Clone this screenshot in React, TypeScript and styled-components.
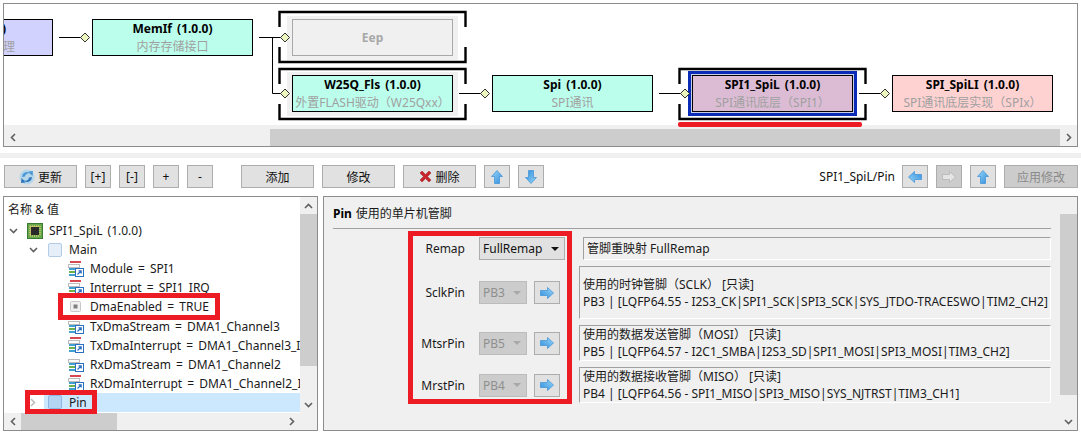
import React from "react";
import styled, { createGlobalStyle } from "styled-components";

const Global = createGlobalStyle`
  html, body { margin: 0; padding: 0; background: #fff; }
  body { font-family: "Noto Sans", "Noto Sans CJK SC", sans-serif; font-size: 12px; color: #1a1a1a; }
  * { box-sizing: border-box; }
`;

const Page = styled.div`
  position: relative;
  width: 1081px;
  height: 435px;
  overflow: hidden;
  background: #fff;
  display: flex;
  flex-direction: column;
  padding: 3px 3px 4px 3px;
`;

const DiagramPanel = styled.div`
  height: 144px;
  flex: none;
  border: 1px solid #8c8c8c;
  display: flex;
  flex-direction: column;
  background: #fff;
`;
const Canvas = styled.div`
  position: relative;
  height: 121px;
  flex: none;
  overflow: hidden;
`;
const Strip = styled.div`height: 4px; flex: none; background: #f0f0f0;`;
const HScroll = styled.div`
  height: 17px;
  display: flex;
  background: #f0f0f0;
  flex: none;
`;
const ScrollArrow = styled.div`
  width: 17px;
  flex: none;
  display: flex;
  align-items: center;
  justify-content: center;
`;
const ThumbGap = styled.div<{ $w: number }>`width: ${p => p.$w}px; flex: none;`;
const ThumbH = styled.div<{ $w: number }>`width: ${p => p.$w}px; flex: none; background: #cdcdcd;`;
const Grow = styled.div`flex: 1;`;

const Node = styled.div<{ $x: number; $y: number; $w: number; $bg: string }>`
  position: absolute;
  left: ${p => p.$x}px;
  top: ${p => p.$y}px;
  width: ${p => p.$w}px;
  height: 37px;
  background: ${p => p.$bg};
  border: 1px solid #000;
  text-align: center;
  display: flex;
  flex-direction: column;
  align-items: center;
  white-space: nowrap;
  overflow: hidden;
`;
const GhostNode = styled(Node)`
  border: 1px solid #a8a8a8;
  justify-content: center;
`;
const GhostName = styled.span`font-weight: 700; color: #a8a8a8; font-size: 12px;`;
const NodeName = styled.div`font-weight: 700; font-size: 12px; line-height: 17px; color: #000; word-spacing: 2px;`;
const NodeSub = styled.div`font-size: 12px; line-height: 19px; color: #a0a0a0;`;
const LeftClip = styled.div<{ $pr: number }>`width: 100%; text-align: right; padding-right: ${p => p.$pr}px;`;
const Plate = styled.div<{ $x: number; $y: number }>`
  position: absolute;
  left: ${p => p.$x}px;
  top: ${p => p.$y}px;
  width: 171px;
  height: 44px;
  background: #f0f0f0;
`;
const SelFrame = styled.div`
  position: absolute;
  left: 684px;
  top: 67px;
  width: 169px;
  height: 45px;
  border: 3px solid #0a2bb8;
  background: #c8d0e8;
`;
const Wires = styled.svg`
  position: absolute;
  left: 0;
  top: 0;
  width: 1073px;
  height: 121px;
  pointer-events: none;
`;
const RedBar = styled.div`
  position: absolute;
  left: 678px;
  top: 122px;
  width: 184px;
  height: 5px;
  border-radius: 2px;
  background: #ed1c24;
`;

const Splitter = styled.div`
  height: 5px;
  flex: none;
  margin: 6px -3px 0;
  background: #f0f0f0;
`;
const Toolbar = styled.div`
  flex: none;
  display: flex;
  align-items: flex-start;
  height: 38px;
  padding: 7px 0 0 1px;
`;
const Btn = styled.div<{ $w: number; $ml?: number; $off?: boolean }>`
  width: ${p => p.$w}px;
  margin-left: ${p => p.$ml ?? 0}px;
  height: 23px;
  flex: none;
  border: 1px solid #adadad;
  background: ${p => (p.$off ? "#cccccc" : "#e1e1e1")};
  color: ${p => (p.$off ? "#8a8a8a" : "#111")};
  display: flex;
  align-items: center;
  justify-content: center;
  gap: 3px;
  font-size: 12px;
`;
const PathText = styled.div`margin-left: auto; margin-right: 7px; margin-top: 3px; color: #111; font-size: 12px;`;

const Bottom = styled.div`
  flex: 1;
  display: flex;
  gap: 5px;
  min-height: 0;
`;
const TreePanel = styled.div`
  width: 315px;
  flex: none;
  border: 1px solid #8c8c8c;
  display: grid;
  grid-template-columns: 296px 17px;
  grid-template-rows: 216px 17px;
  background: #fff;
`;
const TreeBody = styled.div`
  overflow: hidden;
  padding: 2px 0 0 0;
  display: flex;
  flex-direction: column;
  white-space: nowrap;
`;
const Row = styled.div<{ $indent: number }>`
  height: 19.1px;
  flex: none;
  display: flex;
  align-items: center;
  padding-left: ${p => p.$indent}px;
  font-size: 12px;
  word-spacing: 2px;
  color: #1a1a1a;
`;
const HeaderRow = styled.div`
  height: 19px;
  flex: none;
  padding-left: 4px;
  display: flex;
  align-items: center;
  font-size: 12px;
  margin-bottom: 3px;
`;
const SelBand = styled.div`
  display: flex;
  align-items: center;
  flex: 1;
  height: 19px;
  margin-left: -3px;
  background: #cce8ff;
  padding-left: 3px;
`;
const Twist = styled.span`
  width: 16px;
  flex: none;
  margin-right: 6px;
  display: flex;
  align-items: center;
  justify-content: center;
`;
const RowIcon = styled.span`
  width: 16px;
  height: 16px;
  flex: none;
  margin-right: 6px;
  display: flex;
  align-items: center;
  justify-content: center;
`;
const VScroll = styled.div`
  width: 17px;
  flex: none;
  background: #f0f0f0;
  display: flex;
  flex-direction: column;
`;
const VArrow = styled.div`
  height: 17px;
  flex: none;
  display: flex;
  align-items: center;
  justify-content: center;
`;
const ThumbV = styled.div<{ $h: number }>`height: ${p => p.$h}px; flex: none; background: #cdcdcd;`;
const Corner = styled.div`background: #f0f0f0;`;

const PropPanel = styled.div`
  flex: 1;
  border: 1px solid #8c8c8c;
  background: #f0f0f0;
  display: flex;
`;
const PropBody = styled.div`
  flex: 1;
  min-width: 0;
  padding: 8px 9px 0 9px;
`;
const PropTitle = styled.div`
  height: 24px;
  border-bottom: 1px solid #a0a0a0;
  margin-bottom: 8px;
  font-size: 12px;
  color: #1a1a1a;
  display: flex;
  align-items: flex-start;
  line-height: 17px;
  gap: 4px;
`;
const Strong = styled.b`font-weight: 700; color: #000;`;
const Form = styled.div`
  display: grid;
  grid-template-columns: 146px 100px 1fr;
  grid-template-rows: 23px 53px 36px 36px;
  row-gap: 6px;
`;
const Label = styled.div`
  padding-right: 14px;
  display: flex;
  align-items: center;
  justify-content: flex-end;
  font-size: 12px;
`;
const Controls = styled.div`
  display: flex;
  align-items: center;
  gap: 7px;
`;
const Select = styled.div<{ $off?: boolean }>`
  width: ${p => (p.$off ? 48 : 86)}px;
  height: 23px;
  flex: none;
  background: ${p => (p.$off ? "#cccccc" : "#e1e1e1")};
  border: 1px solid ${p => (p.$off ? "#bcbcbc" : "#adadad")};
  color: ${p => (p.$off ? "#8f8f8f" : "#111")};
  display: flex;
  align-items: center;
  justify-content: space-between;
  padding: 0 5px 0 3px;
  font-size: 12px;
`;
const Caret = styled.span<{ $off?: boolean }>`
  width: 0;
  height: 0;
  border-left: 4px solid transparent;
  border-right: 4px solid transparent;
  border-top: 4px solid ${p => (p.$off ? "#a8a8a8" : "#111")};
`;
const GoBtn = styled.div`
  width: 26px;
  height: 23px;
  flex: none;
  border: 1px solid #adadad;
  background: #e1e1e1;
  display: flex;
  align-items: center;
  justify-content: center;
`;
const Desc = styled.div<{ $inset?: number }>`
  margin-left: ${p => p.$inset ?? 0}px;
  border-style: solid;
  border-width: 1px;
  border-color: #a0a0a0 #fff #fff #a0a0a0;
  padding: 0 3px;
  font-size: 12px;
  line-height: 17px;
  white-space: nowrap;
  display: flex;
  flex-direction: column;
  justify-content: center;
  color: #1a1a1a;
  overflow: hidden;
`;

const RedBox = styled.div<{ $x: number; $y: number; $w: number; $h: number }>`
  position: absolute;
  left: ${p => p.$x}px;
  top: ${p => p.$y}px;
  width: ${p => p.$w}px;
  height: ${p => p.$h}px;
  border: 5px solid #ed1c24;
`;

const ChevUp = () => (
  <svg width="9" height="6" viewBox="0 0 9 6"><path d="M1 5 L4.5 1.5 L8 5" fill="none" stroke="#606060" strokeWidth="1.6" /></svg>
);
const ChevDown = () => (
  <svg width="9" height="6" viewBox="0 0 9 6"><path d="M1 1 L4.5 4.5 L8 1" fill="none" stroke="#606060" strokeWidth="1.6" /></svg>
);
const ChevLeft = () => (
  <svg width="6" height="9" viewBox="0 0 6 9"><path d="M5 1 L1.5 4.5 L5 8" fill="none" stroke="#606060" strokeWidth="1.6" /></svg>
);
const ChevRight = ({ color = "#606060" }: { color?: string }) => (
  <svg width="6" height="9" viewBox="0 0 6 9"><path d="M1 1 L4.5 4.5 L1 8" fill="none" stroke={color} strokeWidth="1.6" /></svg>
);

const Refresh = () => (
  <svg width="16" height="16" viewBox="0 0 16 16">
    <circle cx="8" cy="8" r="7.5" fill="#b6d6ea" />
    <path d="M3 8 A5 5 0 0 1 11 4 L9.5 2.5 L14 2 L13.5 7 L12 5.5 A3.4 3.4 0 0 0 6 7.5 Z" fill="#4b98d4" />
    <path d="M13 8 A5 5 0 0 1 5 12 L6.5 13.5 L2 14 L2.5 9 L4 10.5 A3.4 3.4 0 0 0 10 8.5 Z" fill="#2f78bd" />
  </svg>
);
const RedX = () => (
  <svg width="13" height="13" viewBox="0 0 13 13">
    <path d="M1 3 L3 1 L6.5 4.5 L10 1 L12 3 L8.5 6.5 L12 10 L10 12 L6.5 8.5 L3 12 L1 10 L4.5 6.5 Z" fill="#c9252d" stroke="#9a1a20" strokeWidth="0.5" />
  </svg>
);
const Arrow = ({ dir, off }: { dir: "up" | "down" | "left" | "right"; off?: boolean }) => {
  const rot = { up: 0, right: 90, down: 180, left: 270 }[dir];
  const id = `ag${dir}${off ? "o" : ""}`;
  return (
    <svg width="14" height="14" viewBox="0 0 14 14">
      <defs>
        <linearGradient id={id} x1="0" y1="0" x2="1" y2="1">
          <stop offset="0" stopColor="#9ad6f7" />
          <stop offset="1" stopColor="#2f8ede" />
        </linearGradient>
      </defs>
      <path
        transform={`rotate(${rot} 7 7)`}
        d="M7 0.5 L12.5 6.5 L9.5 6.5 L9.5 13.5 L4.5 13.5 L4.5 6.5 L1.5 6.5 Z"
        fill={off ? "#e4e4e4" : `url(#${id})`}
        stroke={off ? "#b0b0b0" : "#3a8fd6"}
        strokeWidth="0.7"
      />
    </svg>
  );
};
const Chip = () => (
  <svg width="16" height="16" viewBox="0 0 16 16">
    <rect x="0.5" y="0.5" width="15" height="15" fill="#66a84e" stroke="#3d7a34" />
    <path d="M3.5 2 V14 M5.5 2 V14 M7.5 2 V14 M9.5 2 V14 M11.5 2 V14 M2 3.5 H14 M2 5.5 H14 M2 7.5 H14 M2 9.5 H14 M2 11.5 H14" stroke="#d8c86a" strokeWidth="0.7" />
    <rect x="4" y="4" width="8" height="8" fill="#2a2a2a" />
  </svg>
);
const Folder = ({ sel }: { sel?: boolean }) => (
  <svg width="14" height="14" viewBox="0 0 14 14">
    <rect x="0.5" y="0.5" width="13" height="13" rx="1.5" fill={sel ? "#b4d4f4" : "#e6eff9"} stroke={sel ? "#8db8e4" : "#b2cbe6"} />
  </svg>
);
const PropIcon = ({ red }: { red?: boolean }) => (
  <svg width="16" height="16" viewBox="0 0 16 16">
    {red && <rect x="2" y="0" width="11" height="2" fill="#d8484f" />}
    <rect x="0.5" y="3.5" width="11" height="3" fill="#fff" stroke="#555" strokeWidth="0.8" strokeDasharray="1 1" />
    <rect x="1" y="7" width="8" height="2" fill="#3f9fd0" />
    <rect x="1" y="10" width="8" height="2" fill="#6cb04c" />
    <rect x="1" y="13" width="8" height="2" fill="#3f9fd0" />
    <rect x="7.5" y="7.5" width="8" height="8" fill="#fff" stroke="#2a6fc0" />
    <path d="M9.5 13.5 L13 10 M10.5 9.8 H13.2 V12.5" fill="none" stroke="#2a6fc0" strokeWidth="1.2" />
  </svg>
);
const Radio = () => (
  <svg width="12" height="12" viewBox="0 0 12 12">
    <rect x="0.5" y="0.5" width="10" height="10" rx="1" fill="#f0f0f0" stroke="#c8c8c8" />
    <rect x="3.5" y="3.5" width="4" height="4" fill="#808080" />
  </svg>
);

const Diamond = ({ x, y }: { x: number; y: number }) => (
  <path d={`M${x} ${y - 4.5} L${x + 4.5} ${y} L${x} ${y + 4.5} L${x - 4.5} ${y} Z`} fill="#eef6c0" stroke="#333" strokeWidth="1" />
);
const bracket = (x: number, y: number, w: number, h: number) => {
  const g = 10;
  const mid = y + h / 2;
  return `M${x} ${mid - g} V${y} H${x + w} V${mid - g} M${x} ${mid + g} V${y + h} H${x + w} V${mid + g}`;
};

const treeItems: { name: string; red?: boolean }[] = [
  { name: "Module = SPI1", red: true },
  { name: "Interrupt = SPI1_IRQ", red: true },
];
const treeItems2: { name: string; red?: boolean }[] = [
  { name: "TxDmaStream = DMA1_Channel3" },
  { name: "TxDmaInterrupt = DMA1_Channel3_IRQ", red: true },
  { name: "RxDmaStream = DMA1_Channel2" },
  { name: "RxDmaInterrupt = DMA1_Channel2_IRQ", red: true },
];

export default function App() {
  return (
    <Page>
      <Global />
      <DiagramPanel>
        <Canvas>
          <Plate $x={283} $y={12} />
          <Plate $x={283} $y={68} />
          <SelFrame />
          <Wires viewBox="0 0 1073 121">
            <g fill="none" stroke="#000" strokeWidth="1">
              <path d="M55 33.5 H78" />
              <path d="M255 33.5 H278 M268.5 33.5 V89.5 H278" />
              <path d="M455 89.5 H478" />
              <path d="M655 89.5 H678" />
              <path d="M855 89.5 H878" />
            </g>
            <g fill="none" stroke="#000" strokeWidth="2.4">
              <path d={bracket(275.5, 8, 186, 50)} />
              <path d={bracket(275.5, 65, 186, 50)} />
              <path d={bracket(675.5, 65, 186, 50)} />
            </g>
            <Diamond x={81} y={33.5} />
            <Diamond x={281} y={33.5} />
            <Diamond x={281} y={89.5} />
            <Diamond x={481} y={89.5} />
            <Diamond x={681} y={89.5} />
            <Diamond x={881} y={89.5} />
          </Wires>
          <Node $x={-112} $y={15} $w={161} $bg="#d2d2ff">
            <LeftClip $pr={46}><NodeName>)</NodeName></LeftClip>
            <LeftClip $pr={37}><NodeSub>理</NodeSub></LeftClip>
          </Node>
          <Node $x={88} $y={15} $w={161} $bg="#bcfeec">
            <NodeName>MemIf (1.0.0)</NodeName>
            <NodeSub>内存存储接口</NodeSub>
          </Node>
          <GhostNode $x={288} $y={15} $w={161} $bg="#f0f0f0">
            <GhostName>Eep</GhostName>
          </GhostNode>
          <Node $x={288} $y={71} $w={161} $bg="#bcfeec">
            <NodeName>W25Q_Fls (1.0.0)</NodeName>
            <NodeSub>外置FLASH驱动（W25Qxx）</NodeSub>
          </Node>
          <Node $x={488} $y={71} $w={161} $bg="#bcfeec">
            <NodeName>Spi (1.0.0)</NodeName>
            <NodeSub>SPI通讯</NodeSub>
          </Node>
          <Node $x={688} $y={71} $w={161} $bg="#dcbcd4">
            <NodeName>SPI1_SpiL (1.0.0)</NodeName>
            <NodeSub>SPI通讯底层（SPI1）</NodeSub>
          </Node>
          <Node $x={888} $y={71} $w={161} $bg="#ffd2d2">
            <NodeName>SPI_SpiLI (1.0.0)</NodeName>
            <NodeSub>SPI通讯底层实现（SPIx）</NodeSub>
          </Node>
        </Canvas>
        <Strip />
        <HScroll>
          <ScrollArrow><ChevLeft /></ScrollArrow>
          <ThumbGap $w={249} />
          <ThumbH $w={790} />
          <Grow />
          <ScrollArrow><ChevRight /></ScrollArrow>
        </HScroll>
      </DiagramPanel>
      <Splitter />
      <Toolbar>
        <Btn $w={73}><Refresh />更新</Btn>
        <Btn $w={26} $ml={8}>[+]</Btn>
        <Btn $w={26} $ml={8}>[-]</Btn>
        <Btn $w={26} $ml={8}>+</Btn>
        <Btn $w={26} $ml={8}>-</Btn>
        <Btn $w={73} $ml={28}>添加</Btn>
        <Btn $w={73} $ml={8}>修改</Btn>
        <Btn $w={73} $ml={8}><RedX />删除</Btn>
        <Btn $w={26} $ml={8}><Arrow dir="up" /></Btn>
        <Btn $w={26} $ml={8}><Arrow dir="down" /></Btn>
        <PathText>SPI1_SpiL/Pin</PathText>
        <Btn $w={26}><Arrow dir="left" /></Btn>
        <Btn $w={26} $ml={8} $off><Arrow dir="right" off /></Btn>
        <Btn $w={26} $ml={8}><Arrow dir="up" /></Btn>
        <Btn $w={74} $ml={8} $off>应用修改</Btn>
      </Toolbar>
      <Bottom>
        <TreePanel>
          <TreeBody>
            <HeaderRow>名称 &amp; 值</HeaderRow>
            <Row $indent={1}><Twist><ChevDown /></Twist><RowIcon><Chip /></RowIcon>SPI1_SpiL (1.0.0)</Row>
            <Row $indent={21}><Twist><ChevDown /></Twist><RowIcon><Folder /></RowIcon>Main</Row>
            {treeItems.map(t => (
              <Row key={t.name} $indent={64}><RowIcon><PropIcon red={t.red} /></RowIcon>{t.name}</Row>
            ))}
            <Row $indent={64}><RowIcon><Radio /></RowIcon>DmaEnabled = TRUE</Row>
            {treeItems2.map(t => (
              <Row key={t.name} $indent={64}><RowIcon><PropIcon red={t.red} /></RowIcon>{t.name}</Row>
            ))}
            <Row $indent={21}>
              <Twist><ChevRight color="#bdbdbd" /></Twist>
              <SelBand><RowIcon><Folder sel /></RowIcon>Pin</SelBand>
            </Row>
          </TreeBody>
          <VScroll>
            <VArrow><ChevUp /></VArrow>
            <ThumbV $h={152} />
            <Grow />
            <VArrow><ChevDown /></VArrow>
          </VScroll>
          <HScroll>
            <ScrollArrow><ChevLeft /></ScrollArrow>
            <ThumbH $w={96} />
            <Grow />
            <ScrollArrow><ChevRight /></ScrollArrow>
          </HScroll>
          <Corner />
        </TreePanel>
        <PropPanel>
          <PropBody>
            <PropTitle><Strong>Pin</Strong> 使用的单片机管脚</PropTitle>
            <Form>
              <Label>Remap</Label>
              <Controls><Select>FullRemap<Caret /></Select></Controls>
              <Desc $inset={4}>管脚重映射 FullRemap</Desc>

              <Label>SclkPin</Label>
              <Controls><Select $off>PB3<Caret $off /></Select><GoBtn><Arrow dir="right" /></GoBtn></Controls>
              <Desc>
                <span>使用的时钟管脚（SCLK） [只读]</span>
                <span>PB3 | [LQFP64.55 - I2S3_CK|SPI1_SCK|SPI3_SCK|SYS_JTDO-TRACESWO|TIM2_CH2]</span>
              </Desc>

              <Label>MtsrPin</Label>
              <Controls><Select $off>PB5<Caret $off /></Select><GoBtn><Arrow dir="right" /></GoBtn></Controls>
              <Desc>
                <span>使用的数据发送管脚（MOSI） [只读]</span>
                <span>PB5 | [LQFP64.57 - I2C1_SMBA|I2S3_SD|SPI1_MOSI|SPI3_MOSI|TIM3_CH2]</span>
              </Desc>

              <Label>MrstPin</Label>
              <Controls><Select $off>PB4<Caret $off /></Select><GoBtn><Arrow dir="right" /></GoBtn></Controls>
              <Desc>
                <span>使用的数据接收管脚（MISO） [只读]</span>
                <span>PB4 | [LQFP64.56 - SPI1_MISO|SPI3_MISO|SYS_NJTRST|TIM3_CH1]</span>
              </Desc>
            </Form>
          </PropBody>
          <VScroll>
            <VArrow />
            <ThumbV $h={181} />
            <Grow />
            <VArrow><ChevDown /></VArrow>
          </VScroll>
        </PropPanel>
      </Bottom>
      <RedBar />
      <RedBox $x={58} $y={293} $w={162} $h={27} />
      <RedBox $x={25} $y={390} $w={72} $h={24} />
      <RedBox $x={408} $y={231} $w={164} $h={173} />
    </Page>
  );
}
